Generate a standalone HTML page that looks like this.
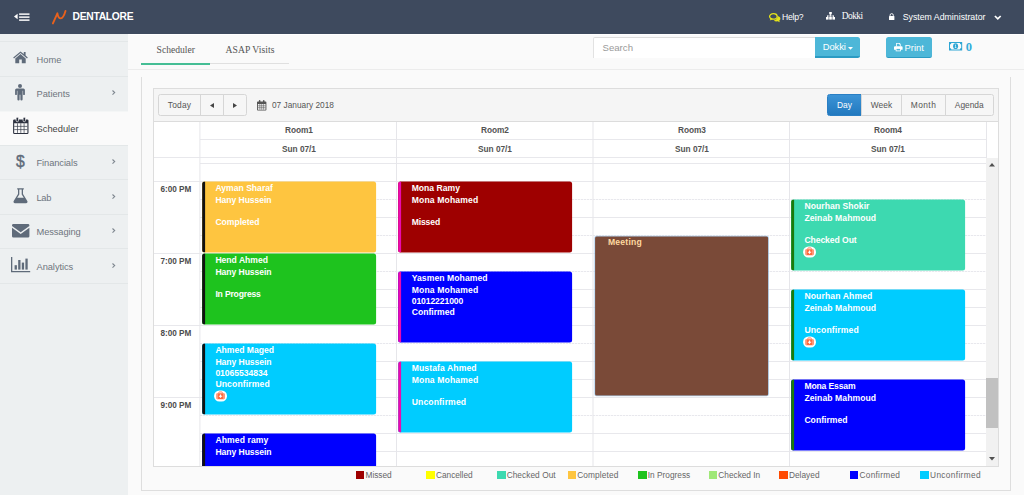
<!DOCTYPE html>
<html lang="en">
<head>
<meta charset="utf-8">
<title>Dentalore - Scheduler</title>
<style>
*{box-sizing:border-box;margin:0;padding:0}
html,body{width:1024px;height:495px;overflow:hidden}
body{font-family:"Liberation Sans",sans-serif;background:#f7f7f7;color:#555;position:relative;font-size:9px}
.abs{position:absolute}
svg{position:absolute;overflow:visible}
#topbar{position:absolute;left:0;top:0;width:1024px;height:33.5px;background:#3e4a5e;color:#fff}
#topbar .brand{position:absolute;left:72.5px;top:9.9px;font-weight:700;font-size:9.9px;line-height:14px;color:#fff;white-space:nowrap}
#topbar .t{position:absolute;white-space:nowrap;color:#fff;line-height:14px;font-size:8.75px;top:9.8px}
#sidebar{position:absolute;left:0;top:33.5px;width:128px;height:462px;background:#edf0f1}
.nav{position:absolute;left:0;width:128px;height:34.5px;border-top:1px solid #e3e7e8;color:#6d757e}
.nav .lbl{position:absolute;left:36.5px;top:10.4px;font-size:9.3px;line-height:14px;white-space:nowrap}
.nav .chev{position:absolute;left:111.8px;top:13.7px;width:3.4px;height:5.2px}
.nav.active{background:#fafafa;color:#444;border-top:1px solid #edf0f1;box-shadow:inset 0 1px 0 #f4f6f6}
#main{position:absolute;left:128px;top:33.5px;width:896px;height:462px;background:#fafafa;border-top:1.5px solid #fff}
.tab{position:absolute;top:43px;font-family:"Liberation Serif",serif;font-size:9.6px;line-height:14px;color:#555;white-space:nowrap}
#sched{position:absolute;left:153px;top:88px;width:846px;height:379px;background:#fff;border:1px solid #dddddd;overflow:hidden}
#toolbar{position:absolute;left:0;top:0;width:844px;height:32.5px;background:#f5f5f5;border-bottom:1px solid #dcdcdc}
.btn{position:absolute;top:4.5px;height:22px;border:1px solid #d6d6d6;background:#f6f6f6;color:#555;font-size:8.4px;line-height:20px;text-align:center;white-space:nowrap}
.hl{position:absolute;height:1px;background:#e8e8ec}
.hd{position:absolute;height:1px;background:repeating-linear-gradient(90deg,#e8e8ed 0,#e8e8ed 2px,#f8f8fa 2px,#f8f8fa 3px)}
.vl{position:absolute;width:1px;background:#e6e6ea}
.hdr{position:absolute;font-weight:700;font-size:8.3px;line-height:12px;color:#535353;text-align:center;white-space:nowrap;width:196px}
.time{position:absolute;left:6.4px;font-weight:700;font-size:8.2px;line-height:12px;color:#4c4c4c;white-space:nowrap}
.ev{position:absolute;width:174px;height:70.9px;border-radius:2.5px;color:#fff;font-weight:700;font-size:8.6px;line-height:11.25px;padding:2.4px 0 0 13.3px;transform:translate(0.1px,0.45px);white-space:nowrap;overflow:hidden}
.ev i{position:absolute;left:0;top:0;bottom:0;width:2.8px;display:block}
.lg{position:absolute;top:470.6px;width:8.5px;height:8.5px}
.lgt{position:absolute;top:467.5px;font-size:8.3px;line-height:14px;color:#666;white-space:nowrap}
</style>
</head>
<body>
<div id="topbar">
<svg style="left:13.8px;top:12.7px" width="16" height="9" viewBox="0 0 16 9"><path d="M0 3.5 L3.6 0.7 V6.3 Z" fill="#fff"/><rect x="5.1" y="0.4" width="10.4" height="1.45" fill="#fff"/><rect x="5.1" y="3.4" width="10.4" height="1.45" fill="#fff"/><rect x="5.1" y="6.4" width="10.4" height="1.45" fill="#fff"/></svg>
<svg style="left:52px;top:9.5px" width="15" height="15" viewBox="0 0 15 15"><path d="M0.9 13.4 L5.4 3.3 C5.8 5.6 6.5 8.4 8.8 8.4 C11.4 8 12.7 3.6 13.5 0.9" fill="none" stroke="#e8611c" stroke-width="1.9" stroke-linecap="round" stroke-linejoin="round"/></svg>
<div class="brand" style="font-size:10.3px;letter-spacing:-0.279px">DENTALORE</div>
<svg style="left:768.8px;top:12.6px" width="12" height="9.5" viewBox="0 0 12 9.5"><ellipse cx="4.4" cy="3.4" rx="3.8" ry="2.8" fill="none" stroke="#e4e21a" stroke-width="1.3"/><path d="M1.6 5.4 L0.8 7.4 L3.6 6.2 Z" fill="#e4e21a"/><path d="M8.6 3 C10.4 3.4 11.4 4.4 11.4 5.6 C11.4 6.5 10.9 7.2 10.2 7.7 L10.9 9.2 L8.6 8.3 C7 8.6 5.6 8.2 4.8 7.4 C7.2 7.2 8.8 5.4 8.6 3 Z" fill="#e4e21a"/></svg>
<div class="t" style="left:782px;font-size:8.6px;letter-spacing:-0.214px">Help?</div>
<svg style="left:825.5px;top:12px" width="9" height="8" viewBox="0 0 9 8"><rect x="3.2" y="0" width="2.6" height="2.4" fill="#fff"/><rect x="4.1" y="2" width="0.8" height="2.6" fill="#fff"/><rect x="1" y="3.6" width="7" height="0.8" fill="#fff"/><rect x="1" y="3.6" width="0.8" height="1.6" fill="#fff"/><rect x="7.2" y="3.6" width="0.8" height="1.6" fill="#fff"/><rect x="0" y="5" width="2.6" height="2.6" fill="#fff"/><rect x="3.2" y="5" width="2.6" height="2.6" fill="#fff"/><rect x="6.4" y="5" width="2.6" height="2.6" fill="#fff"/></svg>
<div class="t" style="left:841.8px;font-family:'Liberation Serif',serif;top:8.8px;font-size:9.4px;letter-spacing:-0.527px">Dokki</div>
<svg style="left:889.4px;top:13px" width="5.4" height="7" viewBox="0 0 5.4 7"><rect x="0" y="3" width="5.4" height="4" rx="0.5" fill="#fff"/><path d="M1.1 3.2 V2.2 a1.6 1.6 0 0 1 3.2 0 V3.2" fill="none" stroke="#fff" stroke-width="0.9"/></svg>
<div class="t" style="left:902.7px;font-size:8.75px;letter-spacing:0.006px">System Administrator</div>
<svg style="left:993.6px;top:14.6px" width="7.6" height="5.4" viewBox="0 0 7.6 5.4"><path d="M0.9 1 L3.8 3.9 L6.7 1" fill="none" stroke="#fff" stroke-width="1.7" stroke-linecap="butt"/></svg>
</div>
<div id="sidebar">
<div class="nav" style="top:-27px;border-top:0"></div>
<div class="nav" style="top:7.8px"><svg style="left:12.8px;top:9px" width="15" height="12.5" viewBox="0 0 15 12.5"><path d="M7.5 0.4 L0.2 6.5 L1 7.4 L7.5 2 L14 7.4 L14.8 6.5 L12.6 4.6 V0.9 H10.8 V3.1 Z" fill="#5f6b7a"/><path d="M7.5 3.1 L2.3 7.4 V12.3 H6.2 V8.6 H8.8 V12.3 H12.7 V7.4 Z" fill="#5f6b7a"/></svg><div class="lbl" style="font-size:9.3px;letter-spacing:0.047px">Home</div></div>
<div class="nav" style="top:42.3px"><svg style="left:15.4px;top:7.5px" width="10" height="16.5" viewBox="0 0 10 16.5"><circle cx="5" cy="2.1" r="2" fill="#5f6b7a"/><path d="M1.6 4.6 H8.4 A1.5 1.5 0 0 1 9.9 6.1 V10.2 A0.9 0.9 0 0 1 8.1 10.2 V6.8 H7.6 V15.4 A1.1 1.1 0 0 1 5.4 15.4 V10.8 H4.6 V15.4 A1.1 1.1 0 0 1 2.4 15.4 V6.8 H1.9 V10.2 A0.9 0.9 0 0 1 0.1 10.2 V6.1 A1.5 1.5 0 0 1 1.6 4.6 Z" fill="#5f6b7a"/></svg><div class="lbl" style="font-size:9.3px;letter-spacing:-0.024px">Patients</div><svg class="chev" viewBox="0 0 3.4 5.2"><path d="M0.5 0.5 L2.7 2.6 L0.5 4.7" fill="none" stroke="#7d858e" stroke-width="1.1"/></svg></div>
<div class="nav active" style="top:76.8px"><svg style="left:12.6px;top:6.2px" width="15.6" height="17.2" viewBox="0 0 15.6 17.2"><path d="M1.3 2.4 H14.3 A1.2 1.2 0 0 1 15.5 3.6 V15.8 A1.2 1.2 0 0 1 14.3 17 H1.3 A1.2 1.2 0 0 1 0.1 15.8 V3.6 A1.2 1.2 0 0 1 1.3 2.4 Z M1.2 6.2 V15.9 H14.4 V6.2 Z" fill="#2d3240" fill-rule="evenodd"/><path d="M4.5 6.2 V15.9 M7.8 6.2 V15.9 M11.1 6.2 V15.9 M1.2 9.4 H14.4 M1.2 12.6 H14.4" stroke="#3a3f4c" stroke-width="0.7" fill="none"/><rect x="3.1" y="0.3" width="2.4" height="4.4" rx="1.1" fill="#2d3240" stroke="#fafafa" stroke-width="0.7"/><rect x="10.1" y="0.3" width="2.4" height="4.4" rx="1.1" fill="#2d3240" stroke="#fafafa" stroke-width="0.7"/></svg><div class="lbl" style="font-size:9.3px;letter-spacing:0.014px">Scheduler</div></div>
<div class="nav" style="top:111.3px"><div class="abs" style="left:16px;top:3.1px;font-size:17.4px;line-height:24px;color:#5f6b7a;font-weight:400;-webkit-text-stroke:0.45px #5f6b7a;transform:scaleX(0.9);transform-origin:0 0">$</div><div class="lbl" style="font-size:9.3px;letter-spacing:-0.086px">Financials</div><svg class="chev" viewBox="0 0 3.4 5.2"><path d="M0.5 0.5 L2.7 2.6 L0.5 4.7" fill="none" stroke="#7d858e" stroke-width="1.1"/></svg></div>
<div class="nav" style="top:145.8px"><svg style="left:12.8px;top:8px" width="15" height="15.5" viewBox="0 0 15 15.5"><path d="M4.2 0.3 H10.8 V1.6 H10 V6 L14.3 12.9 A1.5 1.5 0 0 1 13 15.2 H2 A1.5 1.5 0 0 1 0.7 12.9 L5 6 V1.6 H4.2 Z M6.3 1.6 V6.4 L4.2 9.8 H10.8 L8.7 6.4 V1.6 Z" fill="#5f6b7a" fill-rule="evenodd"/></svg><div class="lbl" style="font-size:9.3px;letter-spacing:-0.305px">Lab</div><svg class="chev" viewBox="0 0 3.4 5.2"><path d="M0.5 0.5 L2.7 2.6 L0.5 4.7" fill="none" stroke="#7d858e" stroke-width="1.1"/></svg></div>
<div class="nav" style="top:180.3px"><svg style="left:11.5px;top:9.2px" width="17.4" height="13.6" viewBox="0 0 17.4 13.6"><path d="M1.4 0 H16 A1.4 1.4 0 0 1 17.4 1.4 V2 L8.7 8.2 L0 2 V1.4 A1.4 1.4 0 0 1 1.4 0 Z" fill="#5f6b7a"/><path d="M0 3.8 L8.7 9.9 L17.4 3.8 V12.2 A1.4 1.4 0 0 1 16 13.6 H1.4 A1.4 1.4 0 0 1 0 12.2 Z" fill="#5f6b7a"/></svg><div class="lbl" style="font-size:9.3px;letter-spacing:-0.097px">Messaging</div><svg class="chev" viewBox="0 0 3.4 5.2"><path d="M0.5 0.5 L2.7 2.6 L0.5 4.7" fill="none" stroke="#7d858e" stroke-width="1.1"/></svg></div>
<div class="nav" style="top:214.8px"><svg style="left:10.9px;top:7.4px" width="19.2" height="15.2" viewBox="0 0 19.2 15.2"><path d="M0 0 H1.3 V13.9 H19.2 V15.2 H0 Z" fill="#5f6b7a"/><rect x="3.6" y="8.2" width="2.3" height="4.4" fill="#5f6b7a"/><rect x="7.2" y="3" width="2.3" height="9.6" fill="#5f6b7a"/><rect x="10.8" y="5.6" width="2.3" height="7" fill="#5f6b7a"/><rect x="14.4" y="1.6" width="2.3" height="11" fill="#5f6b7a"/></svg><div class="lbl" style="font-size:9.3px;letter-spacing:-0.056px">Analytics</div><svg class="chev" viewBox="0 0 3.4 5.2"><path d="M0.5 0.5 L2.7 2.6 L0.5 4.7" fill="none" stroke="#7d858e" stroke-width="1.1"/></svg></div>
<div class="nav" style="top:249.3px;height:1px"></div>
</div>
<div id="main"></div>
<div class="tab" style="left:156.6px;font-size:9.6px;letter-spacing:-0.008px">Scheduler</div>
<div class="tab" style="left:225.5px;font-size:9.6px;letter-spacing:0.071px">ASAP Visits</div>
<div class="abs" style="left:141px;top:63px;width:148px;height:1.3px;background:#e0e0e0"></div>
<div class="abs" style="left:141px;top:63px;width:69px;height:1.6px;background:#45be95"></div>
<div class="abs" style="left:128px;top:69px;width:896px;height:1px;background:#ececec"></div>
<div class="abs" style="left:592.5px;top:37.3px;width:223px;height:20.3px;background:#fff;border-top:1px solid #dddddd;border-left:1px solid #e2e2e2;border-radius:2px 0 0 0"></div>
<div class="abs" style="left:602.5px;top:41px;line-height:14px;color:#9a9a9a;font-size:9.6px;letter-spacing:0.016px">Search</div>
<div class="abs" style="left:814.8px;top:37.4px;width:44.8px;height:21px;background:#4db7d8;border-bottom:2px solid #2b9bc3;border-radius:0 2.5px 2.5px 0"></div>
<div class="abs" style="left:822.8px;top:40.2px;line-height:14px;color:#fff;font-size:9.4px;letter-spacing:-0.091px">Dokki</div>
<svg style="left:848.2px;top:46.6px" width="5" height="3" viewBox="0 0 5 3"><path d="M0 0 H5 L2.5 2.8 Z" fill="#fff"/></svg>
<div class="abs" style="left:886px;top:37.4px;width:45.6px;height:20.4px;background:#4db7d8;border-bottom:1.6px solid #2b9bc3;border-radius:2.5px"></div>
<svg style="left:893.8px;top:42.8px" width="8.6" height="8.3" viewBox="0 0 8.6 8.3"><path d="M2.1 0 H5.6 L6.7 1.1 V3.4 H2.1 Z M2.9 0.8 V3.4 H5.9 V1.6 H5.1 V0.8 Z" fill="#fff" fill-rule="evenodd"/><path d="M1 3.2 H7.6 A1 1 0 0 1 8.6 4.2 V6.4 A0.4 0.4 0 0 1 8.2 6.8 H0.4 A0.4 0.4 0 0 1 0 6.4 V4.2 A1 1 0 0 1 1 3.2 Z" fill="#fff"/><path d="M1.7 5.4 H6.9 V8.3 H1.7 Z" fill="#fff"/><rect x="2.5" y="5.9" width="3.6" height="1.6" fill="#4db7d8"/></svg>
<div class="abs" style="left:904.5px;top:40.6px;line-height:14px;color:#fff;font-size:9.4px;letter-spacing:0.044px">Print</div>
<svg style="left:948.8px;top:42.2px" width="13.2" height="8.4" viewBox="0 0 13.2 8.4"><path d="M0 0 H13.2 V8.4 H0 Z M1 2.4 V6 A1.6 1.6 0 0 1 2.4 7.4 H10.8 A1.6 1.6 0 0 1 12.2 6 V2.4 A1.6 1.6 0 0 1 10.8 1 H2.4 A1.6 1.6 0 0 1 1 2.4 Z" fill="#2ea6d4" fill-rule="evenodd"/><ellipse cx="6.6" cy="4.2" rx="2.5" ry="2.9" fill="#2ea6d4"/><path d="M6 2.9 L6.9 2.5 V5.6 H7.5 V6.1 H5.8 V5.6 H6.4 V3.3 L6 3.4 Z" fill="#fff"/></svg>
<div class="abs" style="left:965.8px;top:38.5px;font-family:'Liberation Serif',serif;font-weight:700;font-size:12.5px;line-height:16px;color:#35acd9">0</div>
<div class="abs" style="left:141px;top:77px;width:870px;height:413.5px;border:1px solid #dedede;border-top:0;background:#fafafa"></div>
<div id="sched">
<div id="toolbar"></div>
<div class="btn" style="left:4px;width:43px;border-radius:2.5px 0 0 2.5px;font-size:8.4px;letter-spacing:0.188px">Today</div>
<div class="btn" style="left:46px;width:24px"></div>
<div class="btn" style="left:69px;width:24px;border-radius:0 2.5px 2.5px 0"></div>
<svg style="left:55.8px;top:13.8px" width="4" height="5" viewBox="0 0 4 5"><path d="M4 0 V5 L0 2.5 Z" fill="#444"/></svg>
<svg style="left:79px;top:13.8px" width="4" height="5" viewBox="0 0 4 5"><path d="M0 0 V5 L4 2.5 Z" fill="#444"/></svg>
<svg style="left:103px;top:10.6px" width="9.4" height="10.6" viewBox="0 0 9.4 10.6"><path d="M0.8 1.4 H8.6 A0.8 0.8 0 0 1 9.4 2.2 V9.8 A0.8 0.8 0 0 1 8.6 10.6 H0.8 A0.8 0.8 0 0 1 0 9.8 V2.2 A0.8 0.8 0 0 1 0.8 1.4 Z M0.9 3.9 V9.7 H8.5 V3.9 Z" fill="#555" fill-rule="evenodd"/><path d="M2.8 3.9 V9.7 M4.7 3.9 V9.7 M6.6 3.9 V9.7 M0.9 5.8 H8.5 M0.9 7.7 H8.5" stroke="#555" stroke-width="0.55" fill="none"/><rect x="1.9" y="0" width="1.5" height="2.8" rx="0.7" fill="#555"/><rect x="6" y="0" width="1.5" height="2.8" rx="0.7" fill="#555"/></svg>
<div class="abs" style="left:118px;top:9px;line-height:14px;color:#555;white-space:nowrap;font-size:8.3px;letter-spacing:0.005px">07 January 2018</div>
<div class="btn" style="left:673px;width:35px;border-radius:2.5px 0 0 2.5px;background:#2a86cc;border-color:#2a7fc4;color:#fff;background:linear-gradient(#3b93d6,#2279bf);font-size:8.4px;letter-spacing:0.031px">Day</div>
<div class="btn" style="left:707px;width:41px;font-size:8.4px;letter-spacing:0.009px">Week</div>
<div class="btn" style="left:747px;width:45px;font-size:8.4px;letter-spacing:0.444px">Month</div>
<div class="btn" style="left:791px;width:48.5px;border-radius:0 2.5px 2.5px 0;font-size:8.4px;letter-spacing:-0.012px">Agenda</div>
<div class="hl" style="left:46px;top:50px;width:786px"></div>
<div class="hl" style="left:0;top:68px;width:832px"></div>
<div class="hl" style="left:46px;top:74px;width:786px"></div>
<div class="hl" style="left:0px;top:92px;width:832px"></div>
<div class="hd" style="left:46px;top:110px;width:786px"></div>
<div class="hl" style="left:46px;top:128px;width:786px"></div>
<div class="hd" style="left:46px;top:146px;width:786px"></div>
<div class="hl" style="left:0px;top:164px;width:832px"></div>
<div class="hd" style="left:46px;top:182px;width:786px"></div>
<div class="hl" style="left:46px;top:200px;width:786px"></div>
<div class="hl" style="left:46px;top:218px;width:786px"></div>
<div class="hl" style="left:0px;top:236px;width:832px"></div>
<div class="hd" style="left:46px;top:254px;width:786px"></div>
<div class="hl" style="left:46px;top:272px;width:786px"></div>
<div class="hl" style="left:46px;top:290px;width:786px"></div>
<div class="hl" style="left:0px;top:308px;width:832px"></div>
<div class="hd" style="left:46px;top:326px;width:786px"></div>
<div class="hl" style="left:46px;top:344px;width:786px"></div>
<div class="hl" style="left:46px;top:362px;width:786px"></div>
<div class="vl" style="left:46px;top:32.5px;height:345.5px;transform:translateX(-0.6px);"></div>
<div class="vl" style="left:242px;top:32.5px;height:345.5px;"></div>
<div class="vl" style="left:439px;top:32.5px;height:345.5px;transform:translateX(-0.5px);"></div>
<div class="vl" style="left:635px;top:32.5px;height:345.5px;"></div>
<div class="vl" style="left:832px;top:32.5px;height:345.5px;"></div>
<div class="hdr" style="left:47px;top:35.2px;font-size:8.3px;letter-spacing:-0.045px">Room1</div>
<div class="hdr" style="left:47px;top:53.6px;font-size:8.3px;letter-spacing:-0.041px">Sun 07/1</div>
<div class="hdr" style="left:243px;top:35.2px;font-size:8.3px;letter-spacing:-0.045px">Room2</div>
<div class="hdr" style="left:243px;top:53.6px;font-size:8.3px;letter-spacing:-0.041px">Sun 07/1</div>
<div class="hdr" style="left:440px;top:35.2px;font-size:8.3px;letter-spacing:-0.045px">Room3</div>
<div class="hdr" style="left:440px;top:53.6px;font-size:8.3px;letter-spacing:-0.041px">Sun 07/1</div>
<div class="hdr" style="left:636px;top:35.2px;font-size:8.3px;letter-spacing:-0.045px">Room4</div>
<div class="hdr" style="left:636px;top:53.6px;font-size:8.3px;letter-spacing:-0.041px">Sun 07/1</div>
<div class="time" style="top:95.1px;font-size:8.2px;letter-spacing:0.007px">6:00 PM</div>
<div class="time" style="top:167.1px;font-size:8.2px;letter-spacing:0.007px">7:00 PM</div>
<div class="time" style="top:239.1px;font-size:8.2px;letter-spacing:0.007px">8:00 PM</div>
<div class="time" style="top:311.1px;font-size:8.2px;letter-spacing:0.007px">9:00 PM</div>
<div class="abs" style="left:832px;top:68.5px;width:12px;height:309.5px;background:#f1f1f1"></div>
<div class="abs" style="left:832px;top:289px;width:12px;height:50px;background:#c1c1c1"></div>
<svg style="left:835.2px;top:73.6px" width="6" height="3.5" viewBox="0 0 5 3" preserveAspectRatio="none"><path d="M0 3 H5 L2.5 0 Z" fill="#505050"/></svg>
<svg style="left:835.2px;top:368.2px" width="6" height="3.5" viewBox="0 0 5 3" preserveAspectRatio="none"><path d="M0 0 H5 L2.5 3 Z" fill="#505050"/></svg>
<div class="ev" style="left:48px;top:92px;height:70.9px;background:#fec540;"><i style="background:#111"></i><div style="font-size:8.6px;letter-spacing:0.001px">Ayman Sharaf</div><div style="font-size:8.6px;letter-spacing:-0.062px">Hany Hussein</div><div>&nbsp;</div><div style="font-size:8.6px;letter-spacing:-0.023px">Completed</div></div>
<div class="ev" style="left:48px;top:164px;height:70.9px;background:#1ec31e;"><i style="background:#111"></i><div style="font-size:8.6px;letter-spacing:-0.009px">Hend Ahmed</div><div style="font-size:8.6px;letter-spacing:-0.062px">Hany Hussein</div><div>&nbsp;</div><div style="font-size:8.6px;letter-spacing:-0.182px">In Progress</div></div>
<div class="ev" style="left:48px;top:254px;height:70.9px;background:#00ccff;"><i style="background:#111"></i><div style="font-size:8.6px;letter-spacing:-0.012px">Ahmed Maged</div><div style="font-size:8.6px;letter-spacing:-0.062px">Hany Hussein</div><div style="font-size:8.6px;letter-spacing:-0.053px">01065534834</div><div style="font-size:8.6px;letter-spacing:0.136px">Unconfirmed</div><svg style="left:12.3px;top:46.7px" width="12.9" height="11.1" viewBox="0 0 12.9 11.1"><rect x="0" y="0" width="12.9" height="11.1" rx="5.2" fill="#fff"/><path d="M4.7 2.9 V2.1 A0.6 0.6 0 0 1 5.3 1.5 H7.6 A0.6 0.6 0 0 1 8.2 2.1 V2.9" fill="none" stroke="#ff6236" stroke-width="0.8"/><rect x="2.3" y="2.8" width="8.3" height="5.9" rx="0.8" fill="#ff6a3e"/><rect x="3.3" y="2.8" width="0.6" height="5.9" fill="#ffb89e"/><rect x="9" y="2.8" width="0.6" height="5.9" fill="#ffb89e"/><path d="M5.9 4.1 H7 V5.2 H8.1 V6.3 H7 V7.4 H5.9 V6.3 H4.8 V5.2 H5.9 Z" fill="#fff"/></svg></div>
<div class="ev" style="left:48px;top:344px;height:70.9px;background:#0000ff;"><i style="background:#111"></i><div style="font-size:8.6px;letter-spacing:0.094px">Ahmed ramy</div><div style="font-size:8.6px;letter-spacing:-0.062px">Hany Hussein</div></div>
<div class="ev" style="left:244.3px;top:92px;height:70.9px;background:#9e0000;"><i style="background:#ea0aae"></i><div style="font-size:8.6px;letter-spacing:0.007px">Mona Ramy</div><div style="font-size:8.6px;letter-spacing:0.139px">Mona Mohamed</div><div>&nbsp;</div><div style="font-size:8.6px;letter-spacing:-0.140px">Missed</div></div>
<div class="ev" style="left:244.3px;top:182px;height:70.9px;background:#0000ff;"><i style="background:#ea0aae"></i><div style="font-size:8.6px;letter-spacing:0.065px">Yasmen Mohamed</div><div style="font-size:8.6px;letter-spacing:0.139px">Mona Mohamed</div><div style="font-size:8.6px;letter-spacing:-0.098px">01012221000</div><div style="font-size:8.6px;letter-spacing:0.015px">Confirmed</div></div>
<div class="ev" style="left:244.3px;top:272px;height:70.9px;background:#00ccff;"><i style="background:#ea0aae"></i><div style="font-size:8.6px;letter-spacing:0.102px">Mustafa Ahmed</div><div style="font-size:8.6px;letter-spacing:0.139px">Mona Mohamed</div><div>&nbsp;</div><div style="font-size:8.6px;letter-spacing:0.136px">Unconfirmed</div></div>
<div class="ev" style="left:440.8px;top:147px;height:159.4px;background:#7a4a38;left:441px;width:172.8px;box-shadow:0 0 0 0.8px rgba(150,195,235,0.75);color:#ffd9a0;padding-left:12.9px;padding-top:0.9px;border-radius:1.5px;"><div style="font-size:8.6px;letter-spacing:0.219px">Meeting</div></div>
<div class="ev" style="left:637px;top:110px;height:70.9px;background:#3dd9b0;"><i style="background:#1a7a0a"></i><div style="font-size:8.6px;letter-spacing:0.045px">Nourhan Shokir</div><div style="font-size:8.6px;letter-spacing:0.081px">Zeinab Mahmoud</div><div>&nbsp;</div><div style="font-size:8.6px;letter-spacing:-0.074px">Checked Out</div><svg style="left:12.3px;top:46.7px" width="12.9" height="11.1" viewBox="0 0 12.9 11.1"><rect x="0" y="0" width="12.9" height="11.1" rx="5.2" fill="#fff"/><path d="M4.7 2.9 V2.1 A0.6 0.6 0 0 1 5.3 1.5 H7.6 A0.6 0.6 0 0 1 8.2 2.1 V2.9" fill="none" stroke="#ff6236" stroke-width="0.8"/><rect x="2.3" y="2.8" width="8.3" height="5.9" rx="0.8" fill="#ff6a3e"/><rect x="3.3" y="2.8" width="0.6" height="5.9" fill="#ffb89e"/><rect x="9" y="2.8" width="0.6" height="5.9" fill="#ffb89e"/><path d="M5.9 4.1 H7 V5.2 H8.1 V6.3 H7 V7.4 H5.9 V6.3 H4.8 V5.2 H5.9 Z" fill="#fff"/></svg></div>
<div class="ev" style="left:637px;top:200px;height:70.9px;background:#00ccff;"><i style="background:#1a7a0a"></i><div style="font-size:8.6px;letter-spacing:0.113px">Nourhan Ahmed</div><div style="font-size:8.6px;letter-spacing:0.081px">Zeinab Mahmoud</div><div>&nbsp;</div><div style="font-size:8.6px;letter-spacing:0.136px">Unconfirmed</div><svg style="left:12.3px;top:46.7px" width="12.9" height="11.1" viewBox="0 0 12.9 11.1"><rect x="0" y="0" width="12.9" height="11.1" rx="5.2" fill="#fff"/><path d="M4.7 2.9 V2.1 A0.6 0.6 0 0 1 5.3 1.5 H7.6 A0.6 0.6 0 0 1 8.2 2.1 V2.9" fill="none" stroke="#ff6236" stroke-width="0.8"/><rect x="2.3" y="2.8" width="8.3" height="5.9" rx="0.8" fill="#ff6a3e"/><rect x="3.3" y="2.8" width="0.6" height="5.9" fill="#ffb89e"/><rect x="9" y="2.8" width="0.6" height="5.9" fill="#ffb89e"/><path d="M5.9 4.1 H7 V5.2 H8.1 V6.3 H7 V7.4 H5.9 V6.3 H4.8 V5.2 H5.9 Z" fill="#fff"/></svg></div>
<div class="ev" style="left:637px;top:290px;height:70.9px;background:#0000ff;"><i style="background:#1a7a0a"></i><div style="font-size:8.6px;letter-spacing:-0.145px">Mona Essam</div><div style="font-size:8.6px;letter-spacing:0.081px">Zeinab Mahmoud</div><div>&nbsp;</div><div style="font-size:8.6px;letter-spacing:0.015px">Confirmed</div></div>
</div>
<div class="lg" style="left:355.9px;background:#9e0000"></div><div class="lgt" style="left:365.5px;font-size:8.3px;letter-spacing:-0.014px">Missed</div>
<div class="lg" style="left:426.47px;background:#ffff00"></div><div class="lgt" style="left:436.07px;font-size:8.3px;letter-spacing:-0.045px">Cancelled</div>
<div class="lg" style="left:497.04px;background:#3dd9b0"></div><div class="lgt" style="left:506.64px;font-size:8.3px;letter-spacing:0.060px">Checked Out</div>
<div class="lg" style="left:567.61px;background:#fec540"></div><div class="lgt" style="left:577.21px;font-size:8.3px;letter-spacing:0.119px">Completed</div>
<div class="lg" style="left:638.18px;background:#1ec31e"></div><div class="lgt" style="left:647.78px;font-size:8.3px;letter-spacing:0.006px">In Progress</div>
<div class="lg" style="left:708.75px;background:#a0e878"></div><div class="lgt" style="left:718.35px;font-size:8.3px;letter-spacing:-0.018px">Checked In</div>
<div class="lg" style="left:779.32px;background:#ff4a00"></div><div class="lgt" style="left:788.92px;font-size:8.3px;letter-spacing:0.035px">Delayed</div>
<div class="lg" style="left:849.89px;background:#0000ff"></div><div class="lgt" style="left:859.49px;font-size:8.3px;letter-spacing:0.269px">Confirmed</div>
<div class="lg" style="left:920.46px;background:#00ccff"></div><div class="lgt" style="left:930.06px;font-size:8.3px;letter-spacing:0.341px">Unconfirmed</div>
</body>
</html>
